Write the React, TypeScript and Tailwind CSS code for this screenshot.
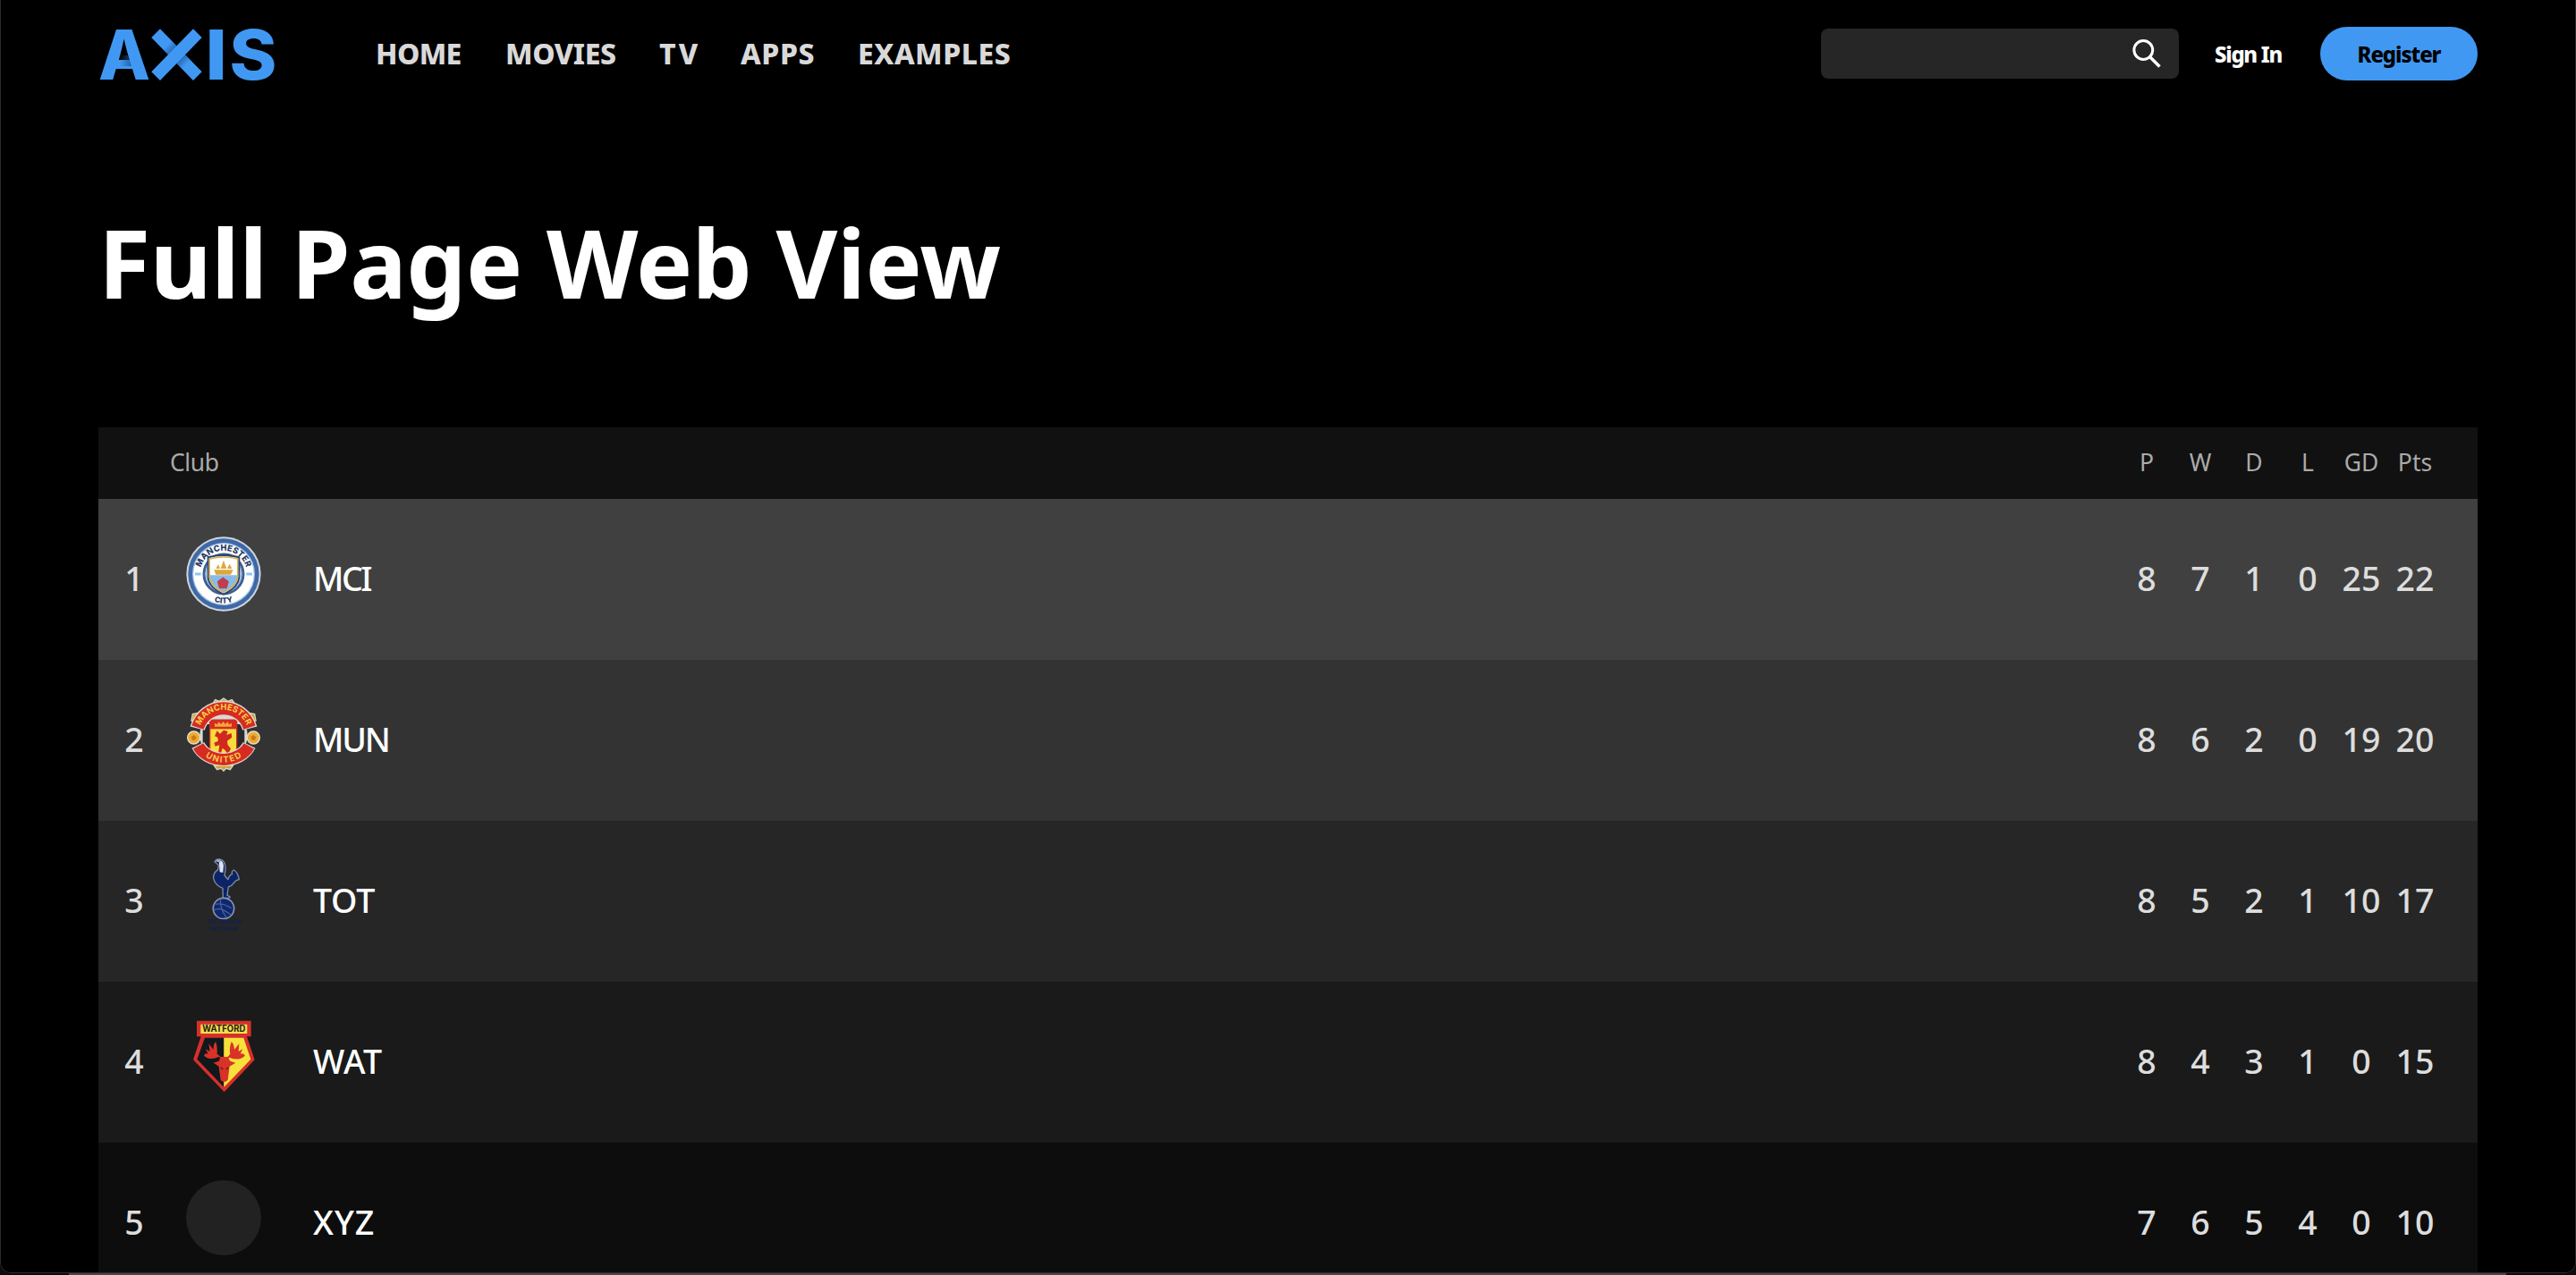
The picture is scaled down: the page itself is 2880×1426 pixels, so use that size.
import type { ReactNode } from 'react'

type Club = {
  rank: number
  name: string
  tracking: string
  stats: number[]
  bg: string
  badge: ReactNode
}

const BLUE = '#4098f2'

function AxisLogo() {
  return (
    <svg width="200" height="120" viewBox="110 0 200 120" aria-label="Axis">
      <defs>
        <linearGradient id="xShade" gradientUnits="userSpaceOnUse" x1="184" y1="48" x2="211" y2="75">
          <stop offset="0.1" stopColor={BLUE} />
          <stop offset="0.35" stopColor="#2566ad" />
          <stop offset="0.65" stopColor="#2566ad" />
          <stop offset="0.9" stopColor={BLUE} />
        </linearGradient>
        <linearGradient id="aShade" x1="0" x2="1">
          <stop offset="0" stopColor="#1b5596" stopOpacity="0" />
          <stop offset="1" stopColor="#1b5596" stopOpacity="0.8" />
        </linearGradient>
      </defs>
      <g fill={BLUE} fontFamily="Inter, sans-serif" fontWeight="800" fontSize="76.5">
        <text x="110" y="89" textLength="58" lengthAdjust="spacingAndGlyphs">A</text>
        <text x="229.5" y="89" textLength="24.5" lengthAdjust="spacingAndGlyphs">I</text>
        <text x="256.5" y="89" textLength="53" lengthAdjust="spacingAndGlyphs">S</text>
      </g>
      <path d="M134 62h9l4 12h-13z" fill="url(#aShade)" />
      <path d="M179 32.3l46.7 48-9.7 9.7-46.7-48z" fill="url(#xShade)" />
      <path d="M216 32.3l9.7 9.7-46.7 48-9.7-9.7z" fill={BLUE} />
    </svg>
  )
}

function CityBadge() {
  return (
    <svg width="84" height="84" viewBox="54 60 252 252">
      <circle cx="180" cy="186" r="125" fill="#cdd5df" />
      <circle cx="180" cy="186" r="119" fill="#3f69a5" />
      <circle cx="180" cy="186" r="105" fill="#a9c6e6" />
      <circle cx="180" cy="186" r="101" fill="#fff" />
      <circle cx="180" cy="186" r="66" fill="#fff" stroke="#3f5f92" strokeWidth="9" />
      <circle cx="180" cy="186" r="59" fill="none" stroke="#8fb5de" strokeWidth="4" />
      <path d="M128 130q52-14 104 0v68q-4 34-52 56q-48-22-52-56z" fill="#fff" stroke="#2c4470" strokeWidth="6" />
      <path d="M133 190h94v10q-6 30-47 48q-41-18-47-48z" fill="#8abbe8" />
      <path d="M133 135q47-12 94 0v63q-6 30-47 49q-41-19-47-49z" fill="none" stroke="#d9b24a" strokeWidth="4" />
      <path d="M148 172h64l-8 16h-50zM154 168l8-14 6 14zM170 168l10-28 10 28zM192 168l8-16 8 16z" fill="#dda83a" />
      <path d="M178 198l18 13-6 22h-24l-6-22z" fill="#c43d4b" stroke="#a63445" strokeWidth="2" />
      <path d="M84 186h20M256 186h20" stroke="#8fc6ee" strokeWidth="9" />
      <path id="cityTop" d="M101 186a79 79 0 0 1 158 0" fill="none" />
      <path id="cityBottom" d="M82 186a98 98 0 0 0 196 0" fill="none" />
      <g fill="#26395f" fontFamily="Inter, sans-serif" fontWeight="800" fontSize="28">
        <text textAnchor="middle" textLength="204">
          <textPath href="#cityTop" startOffset="50%">MANCHESTER</textPath>
        </text>
        <text textAnchor="middle" fontSize="26">
          <textPath href="#cityBottom" startOffset="50%">CITY</textPath>
        </text>
      </g>
    </svg>
  )
}

function UnitedBadge() {
  return (
    <svg width="84" height="84" viewBox="54 60 252 252">
      <g fill="#c9a52b" stroke="#d8d8cc" strokeWidth="4">
        <path d="M142 84l10-16 14 5 14-10 14 10 14-5 12 16z" />
        <path d="M72 138l4-22 20-4-8 26zM288 138l-4-22-20-4 8 26z" />
        <path d="M148 288l10 14 14-4 8 9 8-9 14 4 10-14z" />
      </g>
      <circle cx="180" cy="188" r="80" fill="#d9d9d4" />
      <path d="M110 150h26v84h-26zM224 150h26v84h-26z" fill="#2a2a2c" />
      <path d="M134 136h90v100q-8 22-45 30q-37-8-45-30z" fill="#f8dc3c" stroke="#d42e25" strokeWidth="4" />
      <path d="M134 134h90v32h-90z" fill="#d62b22" />
      <path d="M150 158v-12l8 5 6-9 7 8 8-9 7 9 7-8 6 9 8-5v12z" fill="#f2a63c" />
      <path d="M158 172l10 10 12-12 14 4-4 12 16-6 2 14-16 12 2 14 10 12-10 22-8-16-10-8-6 22-8-2 4-30-14 4-4-12 14-6-2-12-10-4z" fill="#d0281f" />
      <path d="M92 164a91 91 0 0 1 176 0" fill="none" stroke="#dedad2" strokeWidth="50" />
      <path d="M93 161a91 91 0 0 1 174 0" fill="none" stroke="#d62b22" strokeWidth="42" />
      <path d="M94 220a93 78 0 0 0 172 0" fill="none" stroke="#dedad2" strokeWidth="46" />
      <path d="M95 223a93 76 0 0 0 170 0" fill="none" stroke="#d62b22" strokeWidth="39" />
      <g fill="#efab2f" stroke="#e6e2d4" strokeWidth="4">
        <circle cx="80" cy="195" r="21" />
        <circle cx="280" cy="195" r="21" />
      </g>
      <path d="M80 186l9 7-4 10h-10l-4-10zM280 186l9 7-4 10h-10l-4-10z" fill="#c97a1c" />
      <path id="unitedTop" d="M99 166a83 83 0 0 1 162 0" fill="none" />
      <path id="unitedBottom" d="M89 224a98 86 0 0 0 182 0" fill="none" />
      <g fill="#f8d046" fontFamily="Inter, sans-serif" fontWeight="700" fontSize="28">
        <text textAnchor="middle" textLength="200">
          <textPath href="#unitedTop" startOffset="50%">MANCHESTER</textPath>
        </text>
        <text textAnchor="middle" textLength="130">
          <textPath href="#unitedBottom" startOffset="50%">UNITED</textPath>
        </text>
      </g>
    </svg>
  )
}

function SpursBadge() {
  return (
    <svg width="84" height="84" viewBox="54 60 252 252">
      <path
        d="M150 72q4-10 16-9q16 2 19 20q3 16-2 34q6 8 12 14q3-14 14-18q-4-10 5-14q14 8 18 32q-12 2-18 12q-6 10-18 13l-4 28q8 2 10 6l-10 4-4 8h-12l2-14-1-28q-24-8-31-32q-2-18 15-30l2-14q-4-6-13-12z"
        fill="#0c2466" stroke="#7c89a6" strokeWidth="4" strokeLinejoin="round"
      />
      <path d="M164 66q14 0 16 18l-2 24-11-2z" fill="#dfe4ec" />
      <path d="M152 70q6-8 16-6l2 10z" fill="#a2abbd" />
      <circle cx="180" cy="228" r="35" fill="#0e2870" stroke="#8a96b3" strokeWidth="5" />
      <path d="M152 214q28-6 54 14M148 234q20-14 56 16M170 196q-4 30 20 64" fill="none" stroke="#4c6091" strokeWidth="4" />
      <g fill="#10204f" fontFamily="Inter, sans-serif" fontWeight="700" textAnchor="middle">
        <text x="180" y="278" fontSize="17" textLength="116" lengthAdjust="spacingAndGlyphs">TOTTENHAM</text>
        <text x="180" y="302" fontSize="17" textLength="92" lengthAdjust="spacingAndGlyphs">HOTSPUR</text>
      </g>
    </svg>
  )
}

function WatfordBadge() {
  return (
    <svg width="84" height="84" viewBox="54 60 252 252">
      <path d="M106 112h150l28 84-102 108-104-108z" fill="#d5302b" />
      <path d="M117 122h64v166l-90-94z" fill="#11181c" />
      <path d="M181 122h66l24 72-90 94z" fill="#f7e13b" />
      <path
        d="M182 190q-14 0-18-4q-30 14-50-4q4-10 14-6l-8-16 14 8-4-26 16 20q0-22 8-26q6 22 4 40l12 10q6 6 12 6q6 0 12-6l8-10q-4-18 4-40q8 4 10 26l16-20-2 26 14-8-8 16q10-4 16 6q-22 20-52 6q-2 4-14 4z"
        fill="#d93228"
      />
      <path d="M146 206l18-6 6-14h24l8 14 18 6-20 12-6 46q-12 12-24 0l-6-46z" fill="#d93228" />
      <path d="M170 222l8 6M196 222l-8 6" stroke="#5b1714" strokeWidth="4" />
      <path d="M90 65h182v53H90z" fill="#d5302b" />
      <path d="M103 77h156v31H103z" fill="#f4de4a" />
      <text x="181" y="103" textAnchor="middle" textLength="144" lengthAdjust="spacingAndGlyphs" fill="#1d1d17" fontFamily="Inter, sans-serif" fontWeight="700" fontSize="29">
        WATFORD
      </text>
    </svg>
  )
}

const navItems = [
  { label: 'HOME', style: 'w-[145px] tracking-[-0.6px]' },
  { label: 'MOVIES', style: 'w-[172px] tracking-[-0.4px]' },
  { label: 'TV', style: 'w-[91px] tracking-[3px]' },
  { label: 'APPS', style: 'w-[131px] tracking-[0.6px]' },
  { label: 'EXAMPLES', style: 'tracking-[0.5px]' },
]

const columns = ['P', 'W', 'D', 'L', 'GD', 'Pts']

const clubs: Club[] = [
  { rank: 1, name: 'MCI', tracking: 'tracking-[-2.5px]', stats: [8, 7, 1, 0, 25, 22], bg: 'bg-[#404040]', badge: <CityBadge /> },
  { rank: 2, name: 'MUN', tracking: 'tracking-[-2.2px]', stats: [8, 6, 2, 0, 19, 20], bg: 'bg-[#333333]', badge: <UnitedBadge /> },
  { rank: 3, name: 'TOT', tracking: 'tracking-[-0.2px]', stats: [8, 5, 2, 1, 10, 17], bg: 'bg-[#262626]', badge: <SpursBadge /> },
  { rank: 4, name: 'WAT', tracking: 'tracking-[0.2px]', stats: [8, 4, 3, 1, 0, 15], bg: 'bg-[#1a1a1a]', badge: <WatfordBadge /> },
  { rank: 5, name: 'XYZ', tracking: 'tracking-[1px]', stats: [7, 6, 5, 4, 0, 10], bg: 'bg-[#0d0d0d]', badge: <div className="size-[84px] rounded-full bg-[#222222]" /> },
]

function Header() {
  return (
    <header className="flex h-[120px] items-center">
      <AxisLogo />
      <nav className="ml-[110px] flex text-[32px] leading-[60px] font-extrabold text-[#d9d9d9]">
        {navItems.map(item => (
          <a key={item.label} href="#" className={item.style}>{item.label}</a>
        ))}
      </nav>
      <div className="ml-auto flex items-center">
        <div className="flex h-14 w-[400px] items-center justify-end rounded-lg bg-[#262626] pr-5">
          <svg width="32" height="32" viewBox="0 0 32 32" fill="none" stroke="#fff" strokeWidth="3">
            <circle cx="12.3" cy="12" r="10.4" />
            <path d="M19.5 19.5L30.5 30.5" strokeWidth="3.6" />
          </svg>
        </div>
        <a href="#" className="mt-0.5 ml-10 w-[118px] text-2xl leading-[60px] font-extrabold tracking-[-1.3px] text-white">Sign In</a>
        <button className="h-[60px] w-44 rounded-full bg-[#4098f2] pt-0.5 text-2xl font-extrabold tracking-[-1.1px] text-black">Register</button>
      </div>
    </header>
  )
}

function Standings() {
  return (
    <section className="mt-[103px]">
      <div className="flex h-20 items-center bg-[#111111] pr-10 pb-px pl-20 text-[26.5px] text-[#aaaaaa]">
        <div className="flex-1 tracking-[-0.4px]">Club</div>
        {columns.map(col => (
          <div key={col} className="w-[60px] text-center">{col}</div>
        ))}
      </div>
      {clubs.map(club => (
        <div key={club.rank} className={`flex h-[180px] items-center pr-10 pb-[2px] text-[37.5px] font-medium text-[#dddddd] ${club.bg}`}>
          <div className="w-20 text-center">{club.rank}</div>
          <div className="mb-[10px] ml-[18px] w-[142px]">{club.badge}</div>
          <div className={`flex-1 text-white ${club.tracking}`}>{club.name}</div>
          {club.stats.map((value, i) => (
            <div key={columns[i]} className="w-[60px] text-center">{value}</div>
          ))}
        </div>
      ))}
    </section>
  )
}

export default function App() {
  return (
    <div className="h-[1426px] w-[2880px] overflow-hidden bg-[#0c0c0c] font-['Noto_Sans',sans-serif]">
      <div className="relative h-[1424px] overflow-hidden rounded-b-xl bg-black px-[110px]">
        <Header />
        <h1 className="mt-[115px] h-[140px] text-[106px] leading-[116px] font-bold tracking-[-0.4px] text-white">Full Page Web View</h1>
        <Standings />
        {/* window edge */}
        <div className="pointer-events-none absolute inset-0 rounded-b-xl border-x border-b border-[#2b2b2b]" />
      </div>
      <div className="mr-[78px] ml-[77px] h-0.5 bg-[#4a4547]" />
    </div>
  )
}
